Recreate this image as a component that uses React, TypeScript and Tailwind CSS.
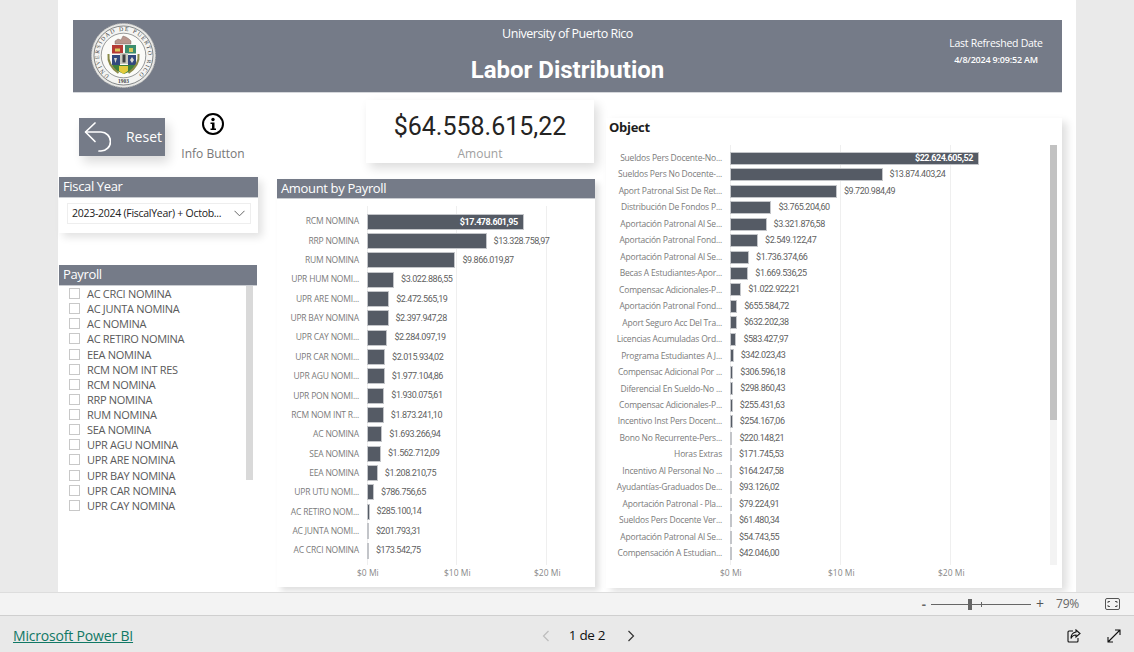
import React from "react";

const payroll: [string, string, number][] = [
  ["RCM NOMINA", "$17.478.601,95", 17.4786],
  ["RRP NOMINA", "$13.328.758,97", 13.3288],
  ["RUM NOMINA", "$9.866.019,87", 9.866],
  ["UPR HUM NOMI...", "$3.022.886,55", 3.0229],
  ["UPR ARE NOMI...", "$2.472.565,19", 2.4726],
  ["UPR BAY NOMINA", "$2.397.947,28", 2.3979],
  ["UPR CAY NOMI...", "$2.284.097,19", 2.2841],
  ["UPR CAR NOMI...", "$2.015.934,02", 2.0159],
  ["UPR AGU NOMI...", "$1.977.104,86", 1.9771],
  ["UPR PON NOMI...", "$1.930.075,61", 1.9301],
  ["RCM NOM INT R...", "$1.873.241,10", 1.8732],
  ["AC NOMINA", "$1.693.266,94", 1.6933],
  ["SEA NOMINA", "$1.562.712,09", 1.5627],
  ["EEA NOMINA", "$1.208.210,75", 1.2082],
  ["UPR UTU NOMI...", "$786.756,65", 0.7868],
  ["AC RETIRO NOM...", "$285.100,14", 0.2851],
  ["AC JUNTA NOMI...", "$201.793,31", 0.2018],
  ["AC CRCI NOMINA", "$173.542,75", 0.1735],
];

const objects: [string, string, number][] = [
  ["Sueldos Pers Docente-No...", "$22.624.605,52", 22.6246],
  ["Sueldos Pers No Docente-...", "$13.874.403,24", 13.8744],
  ["Aport Patronal Sist De Ret...", "$9.720.984,49", 9.721],
  ["Distribución De Fondos P...", "$3.765.204,60", 3.7652],
  ["Aportación Patronal Al Se...", "$3.321.876,58", 3.3219],
  ["Aportación Patronal Fond...", "$2.549.122,47", 2.5491],
  ["Aportación Patronal Al Se...", "$1.736.374,66", 1.7364],
  ["Becas A Estudiantes-Apor...", "$1.669.536,25", 1.6695],
  ["Compensac Adicionales-P...", "$1.022.922,21", 1.0229],
  ["Aportación Patronal Fond...", "$655.584,72", 0.6556],
  ["Aport Seguro Acc Del Tra...", "$632.202,38", 0.6322],
  ["Licencias Acumuladas Ord...", "$583.427,97", 0.5834],
  ["Programa Estudiantes A J...", "$342.023,43", 0.342],
  ["Compensac Adicional Por ...", "$306.596,18", 0.3066],
  ["Diferencial En Sueldo-No ...", "$298.860,43", 0.2989],
  ["Compensac Adicionales-P...", "$255.431,63", 0.2554],
  ["Incentivo Inst Pers Docent...", "$254.167,06", 0.2542],
  ["Bono No Recurrente-Pers...", "$220.148,21", 0.2201],
  ["Horas Extras", "$171.745,53", 0.1717],
  ["Incentivo Al Personal No ...", "$164.247,58", 0.1642],
  ["Ayudantías-Graduados De...", "$93.126,02", 0.0931],
  ["Aportación Patronal - Pla...", "$79.224,91", 0.0792],
  ["Sueldos Pers Docente Ver...", "$61.480,34", 0.0615],
  ["Aportación Patronal Al Se...", "$54.743,55", 0.0547],
  ["Compensación A Estudian...", "$42.046,00", 0.042],
];

const slicer = [
  "AC CRCI NOMINA", "AC JUNTA NOMINA", "AC NOMINA", "AC RETIRO NOMINA", "EEA NOMINA",
  "RCM NOM INT RES", "RCM NOMINA", "RRP NOMINA", "RUM NOMINA", "SEA NOMINA",
  "UPR AGU NOMINA", "UPR ARE NOMINA", "UPR BAY NOMINA", "UPR CAR NOMINA", "UPR CAY NOMINA",
];

const SANS = "font-['Open_Sans','Noto_Sans',sans-serif]";
const DIN = "font-['Roboto',sans-serif]";

function Seal() {
  return (
    <svg width="65" height="65" viewBox="0 0 65 65" className="block">
      <defs>
        <path id="ringPath" d="M 18.500 52.500 A 24.500 24.500 0 1 1 46.500 52.500" fill="none" />
      </defs>
      <circle cx="32.5" cy="32.5" r="32" fill="#e8e8e6" stroke="#bdbdb9" strokeWidth="1" strokeDasharray="1.4 1" />
      <circle cx="32.5" cy="32.5" r="29.5" fill="#f4f4f2" stroke="#55595a" strokeWidth="0.7" />
      <text fontSize="5.8" fill="#3c3f3f" fontFamily="'Liberation Serif',serif" textLength="122">
        <textPath href="#ringPath" startOffset="0" textLength="122">UNIVERSIDAD DE PUERTO RICO</textPath>
      </text>
      <text x="32.5" y="60" textAnchor="middle" fontSize="5.4" fill="#3c3f3f" fontFamily="'Liberation Serif',serif" fontWeight="700">1903</text>
      <circle cx="32.5" cy="32.5" r="22.3" fill="#fbfbf8" stroke="#55595a" strokeWidth="0.6" />
      <path d="M24 21v-3l3-2 3 1 2-4 3 1 3 2 2 2v3z" fill="#b9968d" stroke="#6f5c57" strokeWidth="0.4" />
      <rect x="21" y="22" width="11" height="8.5" fill="#b53a33" />
      <rect x="34" y="22" width="11" height="8.5" fill="#3d8d6c" />
      <rect x="21" y="32" width="8" height="10" fill="#33497e" />
      <rect x="37" y="32" width="8" height="10" fill="#33497e" />
      <rect x="29" y="30" width="8" height="11" fill="#c8cabf" />
      <rect x="31.5" y="31.5" width="3" height="8" fill="#3e4143" />
      <path d="M24 25.5h5v3h-5zM38 25h4v4h-4z" fill="#d9c85b" />
      <path d="M23 35h3l-1.5 5zM41 34l2 3-2 3-2-3z" fill="#d9d9cf" />
      <path d="M21 42h24l-3 5-9 4-9-4z" fill="#3e7f3c" />
      <path d="M28 43h9v5l-4.500 3-4.500-3z" fill="#e2cb3d" />
      <path d="M17.500 31c-1 8 3 14 10 19" fill="none" stroke="#8a8a48" strokeWidth="2" />
      <path d="M47.500 31c1 8-3 14-10 19" fill="none" stroke="#8a8a48" strokeWidth="2" />
    </svg>
  );
}

function BarChart({
  rows, scale, rowClass, barClass, labelClass, insideAbove,
}: {
  rows: [string, string, number][];
  scale: number;
  rowClass: string;
  barClass: string;
  labelClass: string;
  insideAbove: number;
}) {
  return (
    <div className="relative flex flex-col">
      {rows.map(([label, value, v], i) => (
        <div key={i} className={`flex items-center ${rowClass}`}>
          <span className={`${labelClass} shrink-0 pr-2 text-right text-[8.5px] leading-none tracking-[-0.2px] whitespace-nowrap text-[#7b7b7b] ${SANS}`}>{label}</span>
          <div
            className={`relative shrink-0 border border-[#c3c5c9] bg-[#555b65] ${barClass}`}
            style={{ width: Math.max(2, v * scale) }}
          >
            {v > insideAbove && (
              <span className={`absolute right-[5px] top-1/2 -translate-y-1/2 text-[9px] leading-none font-bold tracking-[-0.45px] whitespace-nowrap text-white ${DIN}`}>{value}</span>
            )}
          </div>
          {v <= insideAbove && (
            <span className={`ml-[7px] text-[9px] leading-none tracking-[-0.45px] whitespace-nowrap text-[#5f5f5f] ${DIN}`}>{value}</span>
          )}
        </div>
      ))}
    </div>
  );
}

function Header() {
  return (
    <div className="ml-[15px] grid h-[73px] w-[989px] grid-cols-[1fr_auto_1fr] border-b border-[#d5d7db] bg-[#757b88] text-white">
      <div className="pt-[3px] pl-[18px]">
        <Seal />
      </div>
      <div className={`flex flex-col items-center ${SANS}`}>
        <div className="mt-[5px] text-[12.5px] leading-[17px] font-medium tracking-[-0.5px]">University of Puerto Rico</div>
        <div className="mt-[14px] text-[24px] leading-[28px] font-bold font-['Roboto',sans-serif]">Labor Distribution</div>
      </div>
      <div className="flex justify-end">
        <div className={`mr-[19px] flex w-[94px] flex-col items-center ${SANS}`}>
          <div className="mt-[16px] text-[10.5px] leading-[14px] tracking-[-0.27px] whitespace-nowrap">Last Refreshed Date</div>
          <div className="mt-[3px] text-[9px] leading-[14px] font-semibold tracking-[-0.2px] whitespace-nowrap">4/8/2024 9:09:52 AM</div>
        </div>
      </div>
    </div>
  );
}

function LeftColumn() {
  return (
    <div className="ml-px w-[199px] shrink-0">
      <div className="mt-[25px] ml-[20px] flex h-[64px] items-start">
        <button className="relative flex h-[38px] w-[86px] items-center justify-end bg-[#757b88] pr-[3px] shadow-[4px_6px_10px_rgba(0,0,0,0.14)]">
          <svg width="32" height="38" viewBox="0 0 32 38" className="absolute top-0 left-0" fill="none" stroke="#fff" strokeWidth="1.7" strokeLinecap="round" strokeLinejoin="round">
            <path d="M16 5 6.500 14l9.500 9.500" />
            <path d="M7 14h15a9.500 9.500 0 0 1 0 19h-2" />
          </svg>
          <span className={`text-[14px] leading-none text-white ${SANS}`}>Reset</span>
        </button>
        <div className="ml-[15px] flex w-[66px] flex-col items-center">
          <svg width="24" height="24" viewBox="0 0 24 24" className="-mt-[6px]">
            <circle cx="12" cy="12" r="10" fill="none" stroke="#000" strokeWidth="2" />
            <circle cx="12" cy="7.500" r="1.700" fill="#000" />
            <path d="M9.500 10.500H13.500V16.500H15V18H9.500V16.500H11V12H9.500z" fill="#000" />
          </svg>
          <span className={`mt-[10px] text-[12px] leading-[16px] whitespace-nowrap text-[#777] ${SANS}`}>Info Button</span>
        </div>
      </div>
      <div className="mt-[-5px] h-[56px] bg-white shadow-[4px_4px_8px_rgba(0,0,0,0.12)]">
        <div className={`h-[21px] border-b border-[#c9ccd1] bg-[#757b88] pl-[4px] text-[13px] leading-[19px] tracking-[-0.35px] text-white ${SANS}`}>Fiscal Year</div>
        <div className="mt-[5px] ml-[8px] flex h-[21px] w-[184px] items-center justify-between border border-[#eeeeee] pr-[5px] pl-[4px]">
          <span className={`text-[10.5px] leading-none tracking-[-0.27px] whitespace-nowrap text-[#222] ${SANS}`}>2023-2024 (FiscalYear) + Octob...</span>
          <svg width="11" height="7" viewBox="0 0 11 7" fill="none" stroke="#666" strokeWidth="1"><path d="M.5.800l5 5 5-5" /></svg>
        </div>
      </div>
      <div className="mt-[32px] w-[198px]">
        <div className={`h-[21px] border-b border-[#c9ccd1] bg-[#757b88] pl-[4px] text-[13px] leading-[19px] tracking-[-0.35px] text-white ${SANS}`}>Payroll</div>
        <div className="relative">
          <div className="absolute top-0 right-[4px] h-[194px] w-[7px] bg-[#d9d9d9]" />
          {slicer.map((s) => (
            <div key={s} className="flex h-[15.14px] items-center pl-[10px]">
              <span className="h-[11px] w-[11px] border border-[#c8c8c8] bg-white" />
              <span className={`ml-[7px] text-[11px] leading-none tracking-[-0.3px] whitespace-nowrap text-[#5a5a5a] ${SANS}`}>{s}</span>
            </div>
          ))}
        </div>
      </div>
    </div>
  );
}

function MiddleColumn() {
  return (
    <div className="ml-[19px] w-[318px] shrink-0">
      <div className="mt-[7px] ml-[89px] flex h-[63px] w-[228px] flex-col items-center bg-white shadow-[4px_5px_10px_rgba(0,0,0,0.14)]">
        <div className={`mt-[10px] text-[25px] leading-[34px] whitespace-nowrap text-[#252423] ${DIN}`}>$64.558.615,22</div>
        <div className={`mt-[2px] text-[12px] leading-[16px] text-[#a0a0a0] ${SANS}`}>Amount</div>
      </div>
      <div className="mt-[16px] h-[408px] w-[318px] bg-white shadow-[4px_4px_6px_rgba(0,0,0,0.13)]">
        <div className={`h-[20px] border-b border-[#c9ccd1] bg-[#757b88] pl-[4px] text-[13px] leading-[18px] tracking-[-0.35px] text-white ${SANS}`}>Amount by Payroll</div>
        <div className="relative mt-[7px] h-[359px] pt-[6px]">
          <div className="absolute top-0 bottom-0 left-[90px] w-px bg-[#efefef]" />
          <div className="absolute top-0 bottom-0 left-[179px] w-px bg-[#efefef]" />
          <div className="absolute top-0 bottom-0 left-[269px] w-px bg-[#efefef]" />
          <BarChart rows={payroll} scale={8.97} rowClass="h-[19.35px]" barClass="h-[16px]" labelClass="w-[90px]" insideAbove={15} />
        </div>
        <div className={`relative mt-[1px] h-[14px] text-[8.5px] leading-[14px] text-[#888] ${SANS}`}>
          <span className="absolute left-[80px]">$0 Mi</span>
          <span className="absolute left-[167px]">$10 Mi</span>
          <span className="absolute left-[257px]">$20 Mi</span>
        </div>
      </div>
    </div>
  );
}

function RightColumn() {
  return (
    <div className="mt-[25px] ml-[11px] h-[470px] w-[456px] shrink-0 bg-white shadow-[5px_4px_8px_rgba(0,0,0,0.13)]">
      <div className={`pl-[3px] text-[13px] leading-[18px] font-bold tracking-[-0.3px] text-[#1d1d1d] ${SANS}`}>Object</div>
      <div className="relative mt-[9px] h-[420px] pt-[5px]">
        <div className="absolute top-0 bottom-0 left-[124px] w-px bg-[#efefef]" />
        <div className="absolute top-0 bottom-0 left-[234px] w-px bg-[#efefef]" />
        <div className="absolute top-0 bottom-0 left-[344px] w-px bg-[#efefef]" />
        <div className="absolute top-0 right-[5px] bottom-0 w-[7px] bg-[#f3f3f3]">
          <div className="h-[275px] bg-[#c2c2c2]" />
        </div>
        <BarChart rows={objects} scale={11} rowClass="h-[16.47px]" barClass="h-[13px]" labelClass="w-[124px]" insideAbove={20} />
      </div>
      <div className={`relative mt-[1px] h-[14px] text-[8.5px] leading-[14px] text-[#888] ${SANS}`}>
        <span className="absolute left-[114px]">$0 Mi</span>
        <span className="absolute left-[222px]">$10 Mi</span>
        <span className="absolute left-[332px]">$20 Mi</span>
      </div>
    </div>
  );
}

function StatusBar() {
  return (
    <div className="flex h-[24px] items-center justify-end border-y border-[#cfcfcf] border-t-[#dddddd] bg-[#f3f3f3] pr-[14px]">
      <span className={`text-[13px] leading-none font-bold text-[#666] ${SANS}`}>-</span>
      <div className="relative mx-[5px] h-[11px] w-[100px]">
        <div className="absolute top-[5px] h-px w-full bg-[#666]" />
        <div className="absolute top-0 left-[37px] h-[11px] w-[4px] bg-[#666]" />
        <div className="absolute top-[3px] left-[50px] h-[5px] w-px bg-[#666]" />
      </div>
      <span className={`text-[14px] leading-none text-[#555] ${SANS}`}>+</span>
      <span className={`ml-[12px] w-[25px] text-[12px] leading-none tracking-[-0.2px] text-[#666] ${SANS}`}>79%</span>
      <svg width="15" height="12" viewBox="0 0 15 12" className="ml-[24px]" fill="none" stroke="#555" strokeWidth="1">
        <rect x="0.500" y="0.500" width="14" height="11" rx="1.500" />
        <path d="M3 5V3.500h2M10 3.500h2V5M3 7v1.500h2M10 8.500h2V7" />
      </svg>
    </div>
  );
}

function FooterBar() {
  return (
    <div className={`grid h-[36px] grid-cols-[1fr_auto_1fr] items-center bg-[#e9e9e9] pt-[4px] pr-[13px] pl-[13px] ${SANS}`}>
      <a className="text-[14px] leading-none tracking-[-0.18px] text-[#117865] underline">Microsoft Power BI</a>
      <div className="ml-[43px] flex items-center">
        <svg width="8" height="12" viewBox="0 0 8 12" fill="none" stroke="#bdbdbd" strokeWidth="1.200"><path d="M6.500 1 1.500 6l5 5" /></svg>
        <span className="mr-[22px] ml-[19px] text-[13.5px] leading-none font-medium tracking-[-0.3px] text-[#111]">1 de 2</span>
        <svg width="8" height="12" viewBox="0 0 8 12" fill="none" stroke="#333" strokeWidth="1.200"><path d="M1.500 1l5 5-5 5" /></svg>
      </div>
      <div className="flex items-center justify-end gap-[26px]">
        <svg width="14" height="14" viewBox="0 0 14 14" fill="none" stroke="#111" strokeWidth="1.100">
          <path d="M6 2H2a1 1 0 0 0-1 1v9a1 1 0 0 0 1 1h8a1 1 0 0 0 1-1V9" />
          <path d="M9 1l4 3.500L9 8V6C6.500 6 5 7 4 9.500 4 6 6 3.500 9 3z" />
        </svg>
        <svg width="14" height="14" viewBox="0 0 14 14" fill="none" stroke="#111" strokeWidth="1.100">
          <path d="M1 13 13 1M8 1h5v5M1 8v5h5" />
        </svg>
      </div>
    </div>
  );
}

export default function App() {
  return (
    <div className="flex h-[652px] w-[1134px] flex-col overflow-hidden bg-[#eaeaea]">
      <div className="h-[592px] shrink-0 overflow-hidden">
        <div className="mx-[58px] h-[592px] w-[1018px] bg-white pt-[20px]">
          <Header />
          <div className="flex">
            <LeftColumn />
            <MiddleColumn />
            <RightColumn />
          </div>
        </div>
      </div>
      <StatusBar />
      <FooterBar />
    </div>
  );
}
